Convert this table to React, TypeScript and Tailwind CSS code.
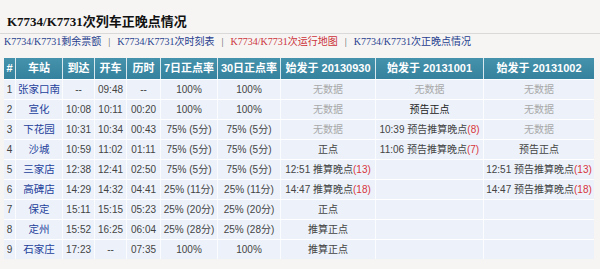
import React from "react";

type Cell = { t?: string; late?: string; kind?: "none" | "dark" };
interface Row {
  no: number;
  station: string;
  arrive: string;
  depart: string;
  dur: string;
  d7: string;
  d30: string;
  c1: Cell;
  c2: Cell;
  c3: Cell;
}

const NONE: Cell = { t: "无数据", kind: "none" };
const EMPTY: Cell = {};

const rows: Row[] = [
  { no: 1, station: "张家口南", arrive: "--", depart: "09:48", dur: "--", d7: "100%", d30: "100%", c1: NONE, c2: NONE, c3: NONE },
  { no: 2, station: "宣化", arrive: "10:08", depart: "10:11", dur: "00:20", d7: "100%", d30: "100%", c1: NONE, c2: { t: "预告正点", kind: "dark" }, c3: NONE },
  { no: 3, station: "下花园", arrive: "10:31", depart: "10:34", dur: "00:43", d7: "75% (5分)", d30: "75% (5分)", c1: NONE, c2: { t: "10:39 预告推算晚点", late: "8" }, c3: NONE },
  { no: 4, station: "沙城", arrive: "10:59", depart: "11:02", dur: "01:11", d7: "75% (5分)", d30: "75% (5分)", c1: { t: "正点" }, c2: { t: "11:06 预告推算晚点", late: "7" }, c3: { t: "预告正点" } },
  { no: 5, station: "三家店", arrive: "12:38", depart: "12:41", dur: "02:50", d7: "75% (5分)", d30: "75% (5分)", c1: { t: "12:51 推算晚点", late: "13" }, c2: EMPTY, c3: { t: "12:51 预告推算晚点", late: "13" } },
  { no: 6, station: "高碑店", arrive: "14:29", depart: "14:32", dur: "04:41", d7: "25% (11分)", d30: "25% (11分)", c1: { t: "14:47 推算晚点", late: "18" }, c2: EMPTY, c3: { t: "14:47 预告推算晚点", late: "18" } },
  { no: 7, station: "保定", arrive: "15:11", depart: "15:15", dur: "05:23", d7: "25% (20分)", d30: "25% (20分)", c1: { t: "正点" }, c2: EMPTY, c3: EMPTY },
  { no: 8, station: "定州", arrive: "15:52", depart: "16:25", dur: "06:04", d7: "25% (28分)", d30: "25% (28分)", c1: { t: "推算正点" }, c2: EMPTY, c3: EMPTY },
  { no: 9, station: "石家庄", arrive: "17:23", depart: "--", dur: "07:35", d7: "100%", d30: "100%", c1: { t: "推算正点" }, c2: EMPTY, c3: EMPTY },
];

const heads = ["#", "车站", "到达", "开车", "历时", "7日正点率", "30日正点率", "始发于 20130930", "始发于 20131001", "始发于 20131002"];

const GRID = "grid grid-cols-[12px_47px_32px_32px_34px_57px_63px_95px_108px_110px]";
const FONT = { fontFamily: '"Liberation Sans", Arial, "Noto Sans CJK SC", sans-serif' };

function Status({ c }: { c: Cell }) {
  if (!c.t) return null;
  if (c.kind === "none") return <span className="text-[#a8a8a8]">{c.t}</span>;
  return (
    <span className={c.kind === "dark" ? "text-[#222]" : "text-[#444]"}>
      {c.t}
      {c.late && <span className="text-[#d8353c]">({c.late})</span>}
    </span>
  );
}

const links = [
  { t: "剩余票额", red: false },
  { t: "次时刻表", red: false },
  { t: "次运行地图", red: true },
  { t: "次正晚点情况", red: false },
];

export default function App() {
  const cell = "flex items-center justify-center border-r border-white/80 whitespace-nowrap";
  return (
    <div className="w-[600px] h-[269px] bg-[#f6f5f4] overflow-hidden" style={FONT}>
      <div className="h-[34px] pt-[9px] pl-[7px] flex items-center border-b border-[#d9d9d9]">
        <h1
          className="text-[13px] font-bold text-[#111] leading-none"
          style={{ fontFamily: '"Liberation Serif", "Noto Sans CJK SC", serif' }}
        >
          K7734/K7731次列车正晚点情况
        </h1>
      </div>

      <div
        className="h-[14px] mt-[1px] pl-[4px] flex items-center text-[10px] leading-none"
        style={{ fontFamily: '"Liberation Serif", "Noto Sans CJK SC", serif' }}
      >
        {links.map((l, i) => (
          <React.Fragment key={l.t}>
            {i > 0 && <span className="mx-[7px] text-[#555]">|</span>}
            <a className={l.red ? "text-[#cc3339]" : "text-[#263e8e]"}>K7734/K7731{l.t}</a>
          </React.Fragment>
        ))}
      </div>

      <div className="ml-[4px] mt-[9px] w-[590px]">
        <div className={`${GRID} h-[21px] bg-gradient-to-b from-[#4592ac] to-[#35829e] text-white font-bold text-[11px]`}>
          {heads.map((h, i) => (
            <div key={h} className={`${cell} ${i === heads.length - 1 ? "border-r-0" : "border-white/50"}`}>
              {h}
            </div>
          ))}
        </div>
        {rows.map(r => (
          <div key={r.no} className={`${GRID} h-[20px] bg-[#edf2fa] border-t border-white text-[10px] text-[#444]`}>
            <div className={cell}>{r.no}</div>
            <div className={`${cell} text-[#24409a] text-[10.5px]`}>{r.station}</div>
            <div className={cell}>{r.arrive}</div>
            <div className={cell}>{r.depart}</div>
            <div className={cell}>{r.dur}</div>
            <div className={cell}>{r.d7}</div>
            <div className={cell}>{r.d30}</div>
            <div className={cell}><Status c={r.c1} /></div>
            <div className={cell}><Status c={r.c2} /></div>
            <div className={`${cell} border-r-0`}><Status c={r.c3} /></div>
          </div>
        ))}
      </div>
    </div>
  );
}
